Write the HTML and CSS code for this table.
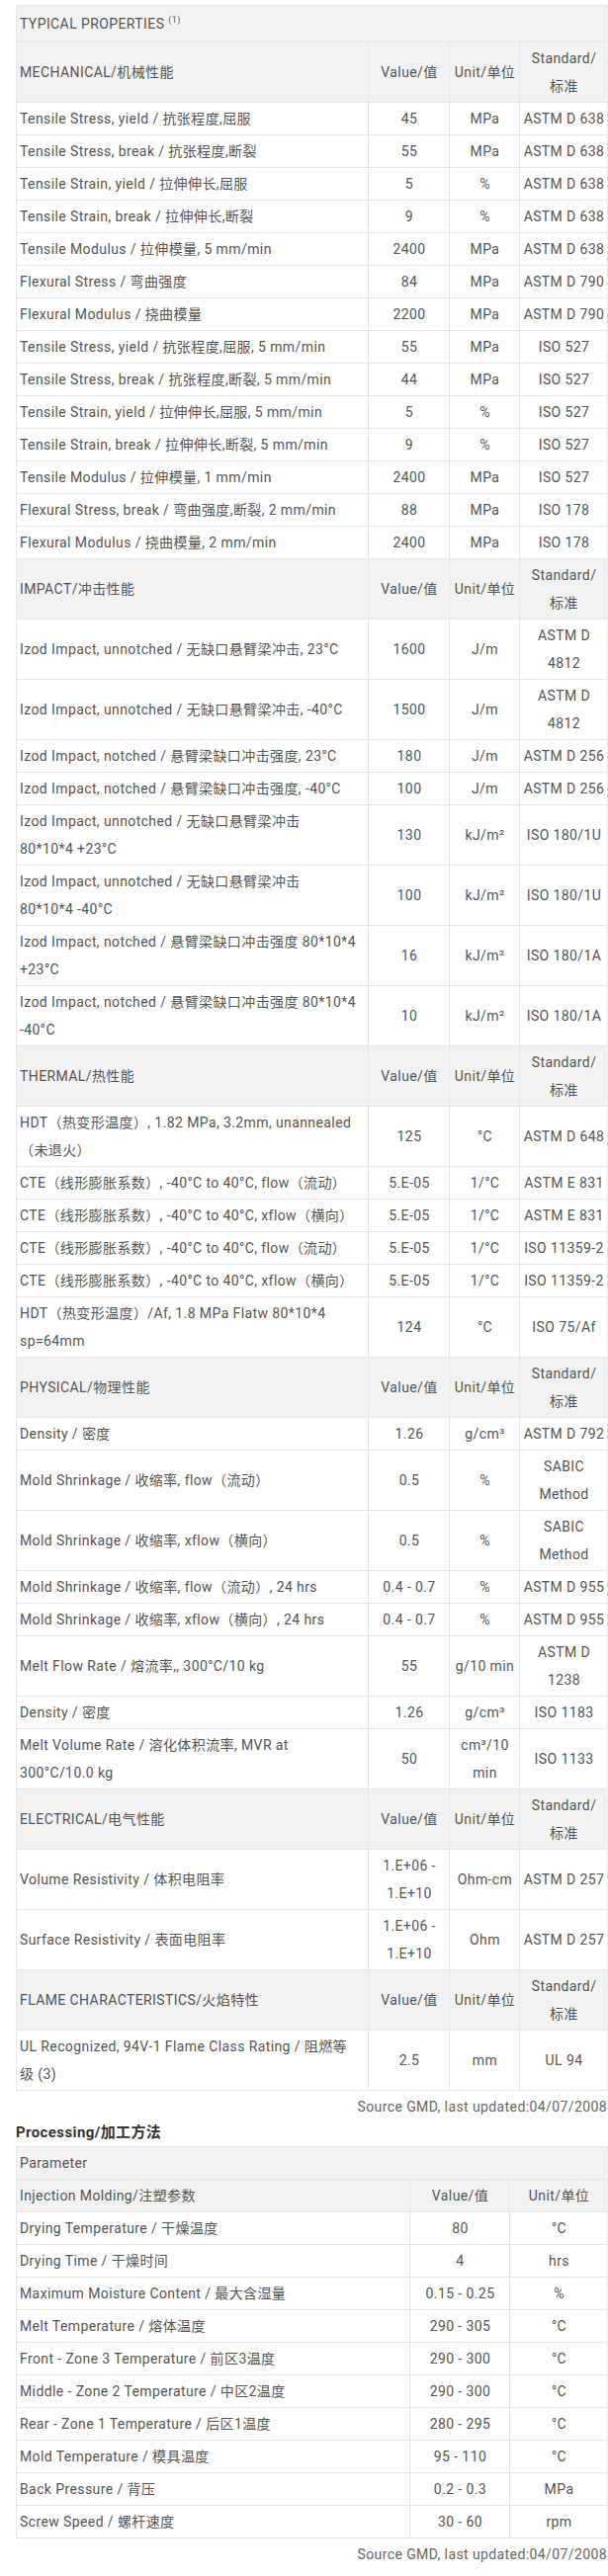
FILE: index.html
```html
<!DOCTYPE html>
<html lang="zh-CN">
<head>
    <meta charset="UTF-8">
    <meta name="viewport" content="width=device-width, initial-scale=1.0">
    <title>Typical Properties</title>
    <link rel="stylesheet" href="styles.css">
</head>
<body>
    <div id="datasheet">
        <table class="props">
            <colgroup>
                <col class="c-name">
                <col class="c-value">
                <col class="c-unit">
                <col class="c-std">
            </colgroup>
            <tr class="title"><td colspan="4">TYPICAL PROPERTIES <sup>(1)</sup></td></tr>

            <tr class="head"><td>MECHANICAL/机械性能</td><td>Value/值</td><td>Unit/单位</td><td>Standard/<br>标准</td></tr>
            <tr><td>Tensile Stress, yield / 抗张程度,屈服</td><td>45</td><td>MPa</td><td>ASTM D 638</td></tr>
            <tr><td>Tensile Stress, break / 抗张程度,断裂</td><td>55</td><td>MPa</td><td>ASTM D 638</td></tr>
            <tr><td>Tensile Strain, yield / 拉伸伸长,屈服</td><td>5</td><td>%</td><td>ASTM D 638</td></tr>
            <tr><td>Tensile Strain, break / 拉伸伸长,断裂</td><td>9</td><td>%</td><td>ASTM D 638</td></tr>
            <tr><td>Tensile Modulus / 拉伸模量, 5 mm/min</td><td>2400</td><td>MPa</td><td>ASTM D 638</td></tr>
            <tr><td>Flexural Stress / 弯曲强度</td><td>84</td><td>MPa</td><td>ASTM D 790</td></tr>
            <tr><td>Flexural Modulus / 挠曲模量</td><td>2200</td><td>MPa</td><td>ASTM D 790</td></tr>
            <tr><td>Tensile Stress, yield / 抗张程度,屈服, 5 mm/min</td><td>55</td><td>MPa</td><td>ISO 527</td></tr>
            <tr><td>Tensile Stress, break / 抗张程度,断裂, 5 mm/min</td><td>44</td><td>MPa</td><td>ISO 527</td></tr>
            <tr><td>Tensile Strain, yield / 拉伸伸长,屈服, 5 mm/min</td><td>5</td><td>%</td><td>ISO 527</td></tr>
            <tr><td>Tensile Strain, break / 拉伸伸长,断裂, 5 mm/min</td><td>9</td><td>%</td><td>ISO 527</td></tr>
            <tr><td>Tensile Modulus / 拉伸模量, 1 mm/min</td><td>2400</td><td>MPa</td><td>ISO 527</td></tr>
            <tr><td>Flexural Stress, break / 弯曲强度,断裂, 2 mm/min</td><td>88</td><td>MPa</td><td>ISO 178</td></tr>
            <tr><td>Flexural Modulus / 挠曲模量, 2 mm/min</td><td>2400</td><td>MPa</td><td>ISO 178</td></tr>

            <tr class="head"><td>IMPACT/冲击性能</td><td>Value/值</td><td>Unit/单位</td><td>Standard/<br>标准</td></tr>
            <tr><td>Izod Impact, unnotched / 无缺口悬臂梁冲击, 23°C</td><td>1600</td><td>J/m</td><td>ASTM D 4812</td></tr>
            <tr><td>Izod Impact, unnotched / 无缺口悬臂梁冲击, -40°C</td><td>1500</td><td>J/m</td><td>ASTM D 4812</td></tr>
            <tr><td>Izod Impact, notched / 悬臂梁缺口冲击强度, 23°C</td><td>180</td><td>J/m</td><td>ASTM D 256</td></tr>
            <tr><td>Izod Impact, notched / 悬臂梁缺口冲击强度, -40°C</td><td>100</td><td>J/m</td><td>ASTM D 256</td></tr>
            <tr><td>Izod Impact, unnotched / 无缺口悬臂梁冲击<br>80*10*4 +23°C</td><td>130</td><td>kJ/m²</td><td>ISO 180/1U</td></tr>
            <tr><td>Izod Impact, unnotched / 无缺口悬臂梁冲击<br>80*10*4 -40°C</td><td>100</td><td>kJ/m²</td><td>ISO 180/1U</td></tr>
            <tr><td>Izod Impact, notched / 悬臂梁缺口冲击强度 80*10*4<br>+23°C</td><td>16</td><td>kJ/m²</td><td>ISO 180/1A</td></tr>
            <tr><td>Izod Impact, notched / 悬臂梁缺口冲击强度 80*10*4<br>-40°C</td><td>10</td><td>kJ/m²</td><td>ISO 180/1A</td></tr>

            <tr class="head"><td>THERMAL/热性能</td><td>Value/值</td><td>Unit/单位</td><td>Standard/<br>标准</td></tr>
            <tr><td>HDT（热变形温度）, 1.82 MPa, 3.2mm, unannealed<br>（未退火）</td><td>125</td><td>°C</td><td>ASTM D 648</td></tr>
            <tr><td>CTE（线形膨胀系数）, -40°C to 40°C, flow（流动）</td><td>5.E-05</td><td>1/°C</td><td>ASTM E 831</td></tr>
            <tr><td>CTE（线形膨胀系数）, -40°C to 40°C, xflow（横向）</td><td>5.E-05</td><td>1/°C</td><td>ASTM E 831</td></tr>
            <tr><td>CTE（线形膨胀系数）, -40°C to 40°C, flow（流动）</td><td>5.E-05</td><td>1/°C</td><td>ISO 11359-2</td></tr>
            <tr><td>CTE（线形膨胀系数）, -40°C to 40°C, xflow（横向）</td><td>5.E-05</td><td>1/°C</td><td>ISO 11359-2</td></tr>
            <tr><td>HDT（热变形温度）/Af, 1.8 MPa Flatw 80*10*4<br>sp=64mm</td><td>124</td><td>°C</td><td>ISO 75/Af</td></tr>

            <tr class="head"><td>PHYSICAL/物理性能</td><td>Value/值</td><td>Unit/单位</td><td>Standard/<br>标准</td></tr>
            <tr><td>Density / 密度</td><td>1.26</td><td>g/cm³</td><td>ASTM D 792</td></tr>
            <tr><td>Mold Shrinkage / 收缩率, flow（流动）</td><td>0.5</td><td>%</td><td>SABIC Method</td></tr>
            <tr><td>Mold Shrinkage / 收缩率, xflow（横向）</td><td>0.5</td><td>%</td><td>SABIC Method</td></tr>
            <tr><td>Mold Shrinkage / 收缩率, flow（流动）, 24 hrs</td><td>0.4 - 0.7</td><td>%</td><td>ASTM D 955</td></tr>
            <tr><td>Mold Shrinkage / 收缩率, xflow（横向）, 24 hrs</td><td>0.4 - 0.7</td><td>%</td><td>ASTM D 955</td></tr>
            <tr><td>Melt Flow Rate / 熔流率,, 300°C/10 kg</td><td>55</td><td>g/10 min</td><td>ASTM D 1238</td></tr>
            <tr><td>Density / 密度</td><td>1.26</td><td>g/cm³</td><td>ISO 1183</td></tr>
            <tr><td>Melt Volume Rate / 溶化体积流率, MVR at<br>300°C/10.0 kg</td><td>50</td><td>cm³/10 min</td><td>ISO 1133</td></tr>

            <tr class="head"><td>ELECTRICAL/电气性能</td><td>Value/值</td><td>Unit/单位</td><td>Standard/<br>标准</td></tr>
            <tr><td>Volume Resistivity / 体积电阻率</td><td>1.E+06 - 1.E+10</td><td>Ohm-cm</td><td>ASTM D 257</td></tr>
            <tr><td>Surface Resistivity / 表面电阻率</td><td>1.E+06 - 1.E+10</td><td>Ohm</td><td>ASTM D 257</td></tr>

            <tr class="head"><td>FLAME CHARACTERISTICS/火焰特性</td><td>Value/值</td><td>Unit/单位</td><td>Standard/<br>标准</td></tr>
            <tr><td>UL Recognized, 94V-1 Flame Class Rating / 阻燃等<br>级 (3)</td><td>2.5</td><td>mm</td><td>UL 94</td></tr>
        </table>
        <p class="source">Source GMD, last updated:04/07/2008</p>

        <h4 class="section">Processing/加工方法</h4>
        <table class="props processing">
            <colgroup>
                <col class="p-name">
                <col class="p-value">
                <col class="p-unit">
            </colgroup>
            <tr class="title"><td colspan="3">Parameter</td></tr>
            <tr class="head"><td>Injection Molding/注塑参数</td><td>Value/值</td><td>Unit/单位</td></tr>
            <tr><td>Drying Temperature / 干燥温度</td><td>80</td><td>°C</td></tr>
            <tr><td>Drying Time / 干燥时间</td><td>4</td><td>hrs</td></tr>
            <tr><td>Maximum Moisture Content / 最大含湿量</td><td>0.15 - 0.25</td><td>%</td></tr>
            <tr><td>Melt Temperature / 熔体温度</td><td>290 - 305</td><td>°C</td></tr>
            <tr><td>Front - Zone 3 Temperature / 前区3温度</td><td>290 - 300</td><td>°C</td></tr>
            <tr><td>Middle - Zone 2 Temperature / 中区2温度</td><td>290 - 300</td><td>°C</td></tr>
            <tr><td>Rear - Zone 1 Temperature / 后区1温度</td><td>280 - 295</td><td>°C</td></tr>
            <tr><td>Mold Temperature / 模具温度</td><td>95 - 110</td><td>°C</td></tr>
            <tr><td>Back Pressure / 背压</td><td>0.2 - 0.3</td><td>MPa</td></tr>
            <tr><td>Screw Speed / 螺杆速度</td><td>30 - 60</td><td>rpm</td></tr>
        </table>
        <p class="source">Source GMD, last updated:04/07/2008</p>
    </div>
</body>
</html>
```

FILE: styles.css
```css
/* Stil general */
body {
    margin: 0;
    background-color: #ffffff;
    font-family: Roboto, "Noto Sans CJK SC", sans-serif;
    font-size: 14px;
    letter-spacing: 0.4px;
    color: #555555;
}

#datasheet {
    width: 598px;
    padding: 5px 1px 0 16px;
}

/* Tabel proprietati */
.props {
    width: 598px;
    border-collapse: collapse;
    table-layout: fixed;
    border: 1px solid #333333;
}

.props td {
    padding: 2px 2px 2px 3px;
    line-height: 28px;
    border: 1px solid #e6e6e6;
    text-align: center;
    vertical-align: middle;
}

/* prima coloana nu se rupe singura, doar unde e <br> */
.props td:first-child {
    text-align: left;
    white-space: nowrap;
}

.c-name { width: 356px; }
.c-value { width: 82px; }
.c-unit { width: 71px; }
.c-std { width: 89px; }

.p-name { width: 398px; }
.p-value { width: 101px; }
.p-unit { width: 99px; }

.props .title td {
    padding-top: 4px;
    padding-bottom: 4px;
    background-color: #f2f2f2;
}

.processing .title td {
    padding-top: 2px;
    padding-bottom: 2px;
}

.title sup {
    font-size: 9px;
    line-height: 0;
}

.props .head td {
    background-color: #f2f2f2;
}

.source {
    margin: 2px 0 0;
    line-height: 28px;
    text-align: right;
    color: #666666;
}

.section {
    margin: 0 0 2px;
    line-height: 24px;
    font-size: 15px;
    font-weight: bold;
    color: #333333;
}
```
